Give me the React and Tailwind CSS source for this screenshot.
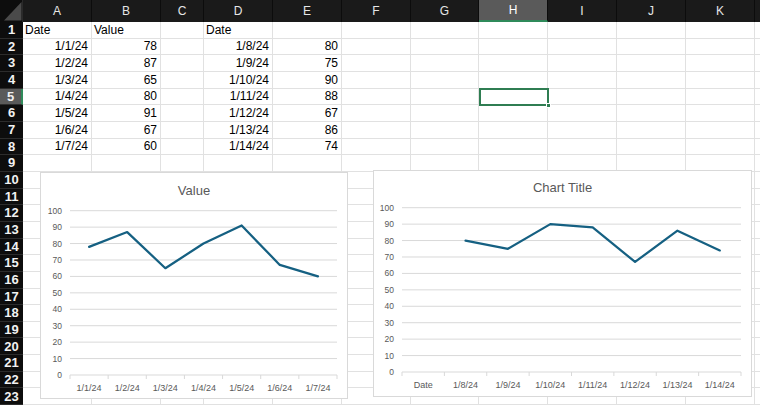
import React from "react";

const COLS = [
  { l: "A", w: "w-[69px]" },
  { l: "B", w: "w-[69px]" },
  { l: "C", w: "w-[43px]" },
  { l: "D", w: "w-[69px]" },
  { l: "E", w: "w-[69px]" },
  { l: "F", w: "w-[69px]" },
  { l: "G", w: "w-[68px]" },
  { l: "H", w: "w-[69px]" },
  { l: "I", w: "w-[69px]" },
  { l: "J", w: "w-[69px]" },
  { l: "K", w: "w-[69px]" },
  { l: "", w: "w-[40px]" },
];

const DATA = {
  1: { A: ["Date", "l"], B: ["Value", "l"], D: ["Date", "l"] },
  2: { A: ["1/1/24"], B: ["78"], D: ["1/8/24"], E: ["80"] },
  3: { A: ["1/2/24"], B: ["87"], D: ["1/9/24"], E: ["75"] },
  4: { A: ["1/3/24"], B: ["65"], D: ["1/10/24"], E: ["90"] },
  5: { A: ["1/4/24"], B: ["80"], D: ["1/11/24"], E: ["88"] },
  6: { A: ["1/5/24"], B: ["91"], D: ["1/12/24"], E: ["67"] },
  7: { A: ["1/6/24"], B: ["67"], D: ["1/13/24"], E: ["86"] },
  8: { A: ["1/7/24"], B: ["60"], D: ["1/14/24"], E: ["74"] },
};

function Chart({ title, cats, vals, w, h, pl, pr, yTop, yBot, titleY, className }) {
  const n = cats.length;
  const cw = (pr - pl) / n;
  const y = (v) => yBot - ((yBot - yTop) * v) / 100;
  const pts = vals
    .map((v, i) => (v == null ? null : `${pl + cw * (i + 0.5)},${y(v)}`))
    .filter(Boolean)
    .join(" ");
  const ticks = [];
  for (let v = 0; v <= 100; v += 10) ticks.push(v);
  return (
    <div className={`absolute bg-white border border-[#d9d9d9] ${className}`}>
      <svg width={w} height={h} style={{ display: "block" }} fontFamily="'Liberation Sans', Arial, sans-serif">
        <text x={w / 2} y={titleY} textAnchor="middle" fontSize="13" fill="#595959">
          {title}
        </text>
        {ticks.map((v) => (
          <g key={v}>
            <line x1={pl} x2={pr} y1={y(v)} y2={y(v)} stroke="#d9d9d9" strokeWidth="1" />
            <text x={pl - 8} y={y(v) + 3} textAnchor="end" fontSize="8.5" fill="#595959">
              {v}
            </text>
          </g>
        ))}
        {Array.from({ length: n + 1 }).map((_, i) => (
          <line key={i} x1={pl + cw * i} x2={pl + cw * i} y1={yBot} y2={yBot + 4} stroke="#d9d9d9" strokeWidth="1" />
        ))}
        {cats.map((c, i) => (
          <text key={c} x={pl + cw * (i + 0.5)} y={yBot + 16} textAnchor="middle" fontSize="9" fill="#595959">
            {c}
          </text>
        ))}
        <polyline points={pts} fill="none" stroke="#156082" strokeWidth="2.25" strokeLinejoin="round" strokeLinecap="round" />
      </svg>
    </div>
  );
}

export default function App() {
  const rows = Array.from({ length: 23 }, (_, i) => i + 1);
  return (
    <div className="relative w-[760px] h-[406px] overflow-hidden bg-white" style={{ fontFamily: "'Liberation Sans', Arial, sans-serif" }}>
      <div className="flex h-[22px] bg-[#1a1a1a]">
        <div className="w-[23px] shrink-0 bg-[#0d0d0d] border-r border-[#2a2a2a]">
          <svg width="23" height="22" style={{ display: "block" }}>
            <polygon points="21.5,2 21.5,20.5 4,20.5" fill="#4a4a4a" />
          </svg>
        </div>
        {COLS.map((c) => (
          <div
            key={c.l || "x"}
            className={`${c.w} shrink-0 flex items-center justify-center text-[12px] border-r border-[#0c0c0c] ${
              c.l === "H" ? "bg-[#5a5a5a] border-b-2 border-b-[#2f8a5a] text-white" : "text-[#e6e6e6]"
            }`}
          >
            {c.l}
          </div>
        ))}
      </div>
      {rows.map((r) => (
        <div key={r} className="flex h-[16.67px]">
          <div
            className={`w-[23px] shrink-0 flex items-center justify-center text-[13px] font-bold border-b border-[#2c2c2c] ${
              r === 5 ? "bg-[#5a5a5a] text-[#f0f0f0] border-r-2 border-r-[#2f8a5a]" : "bg-[#0d0d0d] text-[#f2f2f2]"
            }`}
          >
            {r}
          </div>
          {COLS.map((c) => {
            const cell = DATA[r] && DATA[r][c.l];
            const selected = r === 5 && c.l === "H";
            return (
              <div
                key={c.l || "x"}
                className={`${c.w} shrink-0 relative border-r border-b border-[#e1e1e1] text-[12px] text-black flex items-center leading-none whitespace-nowrap ${
                  cell && cell[1] === "l" ? "justify-start pl-[2px]" : "justify-end pr-[3px]"
                }`}
              >
                {cell ? cell[0] : ""}
                {selected && (
                  <div className="absolute left-0 top-[-1px] w-[70px] h-[18px] border-2 border-[#2f7d52] z-10">
                    <div className="absolute right-[-4px] bottom-[-4px] w-[5px] h-[5px] bg-[#2f7d52] border border-white" />
                  </div>
                )}
              </div>
            );
          })}
        </div>
      ))}
      <Chart
        className="left-[40px] top-[172px]"
        title="Value"
        cats={["1/1/24", "1/2/24", "1/3/24", "1/4/24", "1/5/24", "1/6/24", "1/7/24"]}
        vals={[78, 87, 65, 80, 91, 67, 60]}
        w={306}
        h={225}
        pl={29}
        pr={296}
        yTop={37.7}
        yBot={202}
        titleY={21.5}
      />
      <Chart
        className="left-[373px] top-[170px]"
        title="Chart Title"
        cats={["Date", "1/8/24", "1/9/24", "1/10/24", "1/11/24", "1/12/24", "1/13/24", "1/14/24"]}
        vals={[null, 80, 75, 90, 88, 67, 86, 74]}
        w={377}
        h={225}
        pl={28}
        pr={367}
        yTop={36.7}
        yBot={201}
        titleY={20.5}
      />
    </div>
  );
}
